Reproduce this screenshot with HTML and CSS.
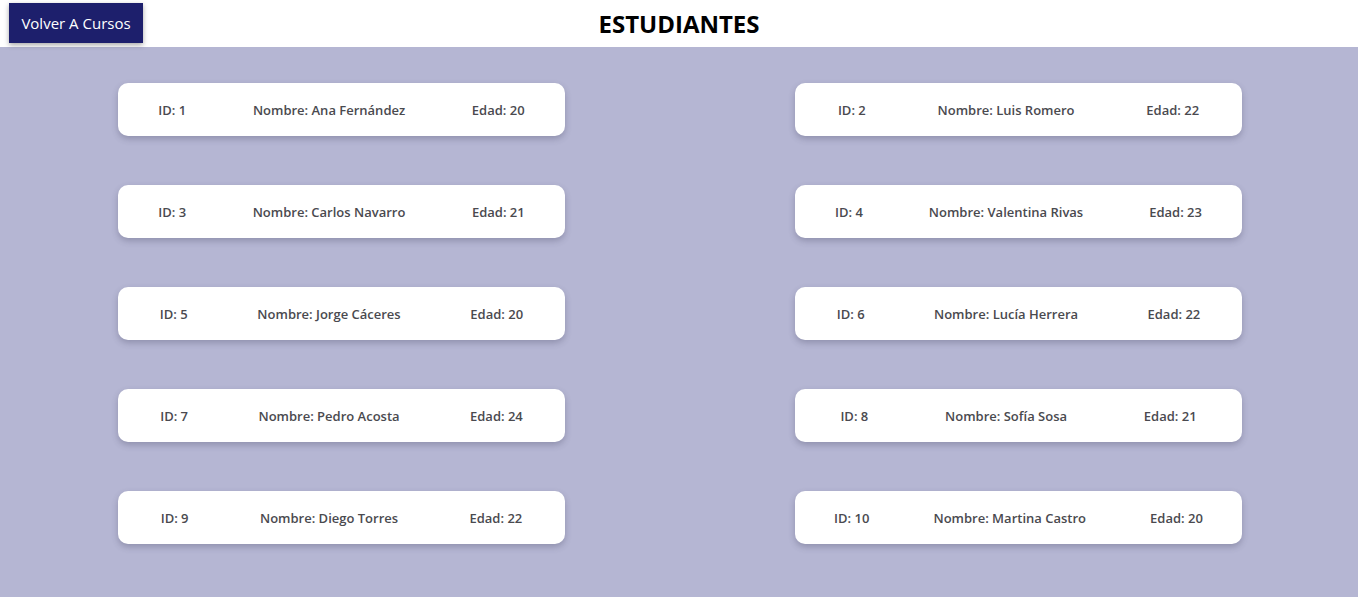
FILE: index.html
```html
<!DOCTYPE html>
<html lang="es">
<head>
<meta charset="utf-8">
<title>Estudiantes</title>
<link rel="stylesheet" href="styles.css">
</head>
<body>
<header class="topbar">
  <button class="back-btn">Volver A Cursos</button>
  <h1 class="title">ESTUDIANTES</h1>
</header>
<main class="grid">
  <div class="card"><span>ID: 1</span><span>Nombre: Ana Fernández</span><span>Edad: 20</span></div>
  <div class="card"><span>ID: 2</span><span>Nombre: Luis Romero</span><span>Edad: 22</span></div>
  <div class="card"><span>ID: 3</span><span>Nombre: Carlos Navarro</span><span>Edad: 21</span></div>
  <div class="card"><span>ID: 4</span><span>Nombre: Valentina Rivas</span><span>Edad: 23</span></div>
  <div class="card"><span>ID: 5</span><span>Nombre: Jorge Cáceres</span><span>Edad: 20</span></div>
  <div class="card"><span>ID: 6</span><span>Nombre: Lucía Herrera</span><span>Edad: 22</span></div>
  <div class="card"><span>ID: 7</span><span>Nombre: Pedro Acosta</span><span>Edad: 24</span></div>
  <div class="card"><span>ID: 8</span><span>Nombre: Sofía Sosa</span><span>Edad: 21</span></div>
  <div class="card"><span>ID: 9</span><span>Nombre: Diego Torres</span><span>Edad: 22</span></div>
  <div class="card"><span>ID: 10</span><span>Nombre: Martina Castro</span><span>Edad: 20</span></div>
</main>
</body>
</html>
```
FILE: styles.css
```css
* { box-sizing: border-box; }
html, body { margin: 0; padding: 0; }
body {
  background: #b5b6d3;
  font-family: "Open Sans", "Noto Sans", sans-serif;
  min-height: 597px;
}
.topbar {
  position: relative;
  background: #ffffff;
  height: 47px;
  display: flex;
  align-items: center;
  justify-content: center;
}
.back-btn {
  position: absolute;
  left: 9px;
  top: 3px;
  width: 134px;
  height: 40px;
  background: #1d1f6c;
  color: #ffffff;
  border: none;
  font-family: "Open Sans", "Noto Sans", sans-serif;
  font-size: 15px;
  box-shadow: 0 2px 5px rgba(0,0,0,0.35);
  cursor: pointer;
}
.title {
  margin: 0;
  font-size: 24px;
  font-weight: 700;
  color: #000;
  letter-spacing: 0;
}
.grid {
  display: grid;
  grid-template-columns: 1fr 1fr;
  justify-items: center;
  row-gap: 49px;
  padding: 36px 1px 40px 3px;
}
.card {
  width: 447px;
  height: 53px;
  background: #ffffff;
  border-radius: 10px;
  box-shadow: 0 3px 6px rgba(60,60,90,0.3);
  display: flex;
  align-items: center;
  justify-content: space-around;
  padding: 0 7px;
  font-size: 13px;
  font-weight: 600;
  color: #4a4a4f;
}
```
